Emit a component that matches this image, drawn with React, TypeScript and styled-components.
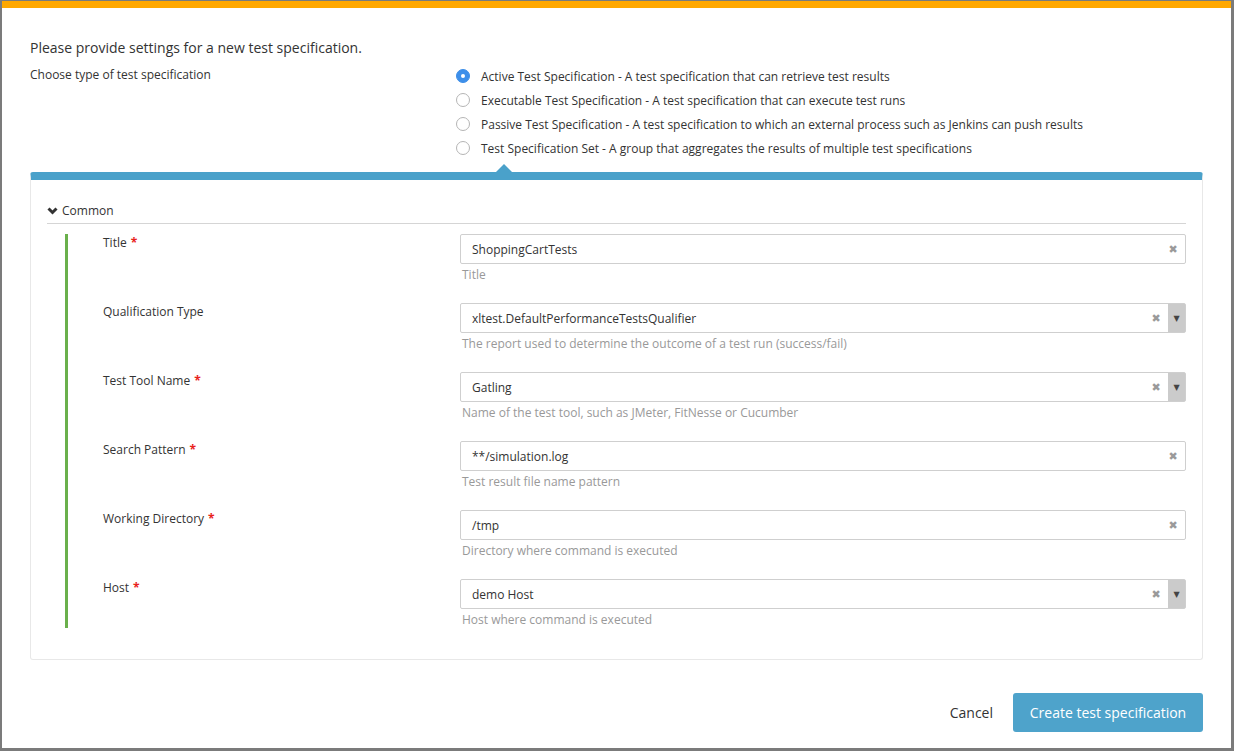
import React from "react";
import styled, { createGlobalStyle } from "styled-components";

const GlobalStyle = createGlobalStyle`
  html, body { margin: 0; padding: 0; background: #fff; }
  body { font-family: "Open Sans", "Liberation Sans", sans-serif; color: #333; }
  * { box-sizing: border-box; }
`;

const Window = styled.div`
  width: 1234px;
  height: 751px;
  border-style: solid;
  border-color: #7b7b7b;
  border-width: 1px 3px 3px 2px;
  background: #fff;
  display: flex;
  flex-direction: column;
  overflow: hidden;
`;

const TopBar = styled.div`
  height: 7px;
  background: #ffa800;
  flex: none;
`;

const Body = styled.div`
  padding: 30px 28px 0 28px;
  display: flex;
  flex-direction: column;
`;

const Intro = styled.div`
  font-size: 14px;
  line-height: 20px;
  color: #333;
`;

const TypeSection = styled.div`
  margin-top: 6px;
  display: grid;
  grid-template-columns: 426px 1fr;
`;

const TypeLabel = styled.div`
  font-size: 12px;
  line-height: 20px;
  padding-top: 1px;
  color: #333;
`;

const RadioList = styled.div`
  display: flex;
  flex-direction: column;
`;

const RadioRow = styled.label`
  display: flex;
  align-items: center;
  height: 24px;
  font-size: 12px;
  color: #333;
  gap: 11px;
`;

const RadioDot = styled.span<{ $checked?: boolean }>`
  width: 14px;
  height: 14px;
  border-radius: 50%;
  flex: none;
  border: 1px solid ${(p) => (p.$checked ? "#3d8ee8" : "#b5b5b5")};
  background: ${(p) => (p.$checked ? "#3d8fea" : "#fff")};
  display: flex;
  align-items: center;
  justify-content: center;
  &::after {
    content: "";
    width: 4px;
    height: 4px;
    border-radius: 50%;
    background: #fff;
    display: ${(p) => (p.$checked ? "block" : "none")};
  }
`;

const Panel = styled.div`
  position: relative;
  margin-top: 12px;
  border: 1px solid #e8e8e8;
  border-top: 8px solid #4aa1ca;
  border-radius: 3px;
  padding: 22px 16px 31px 16px;
  &::before {
    content: "";
    position: absolute;
    top: -16px;
    left: 465px;
    border-left: 8px solid transparent;
    border-right: 8px solid transparent;
    border-bottom: 8px solid #4aa1ca;
  }
`;

const SectionHeader = styled.div`
  display: flex;
  align-items: center;
  gap: 4px;
  font-size: 12px;
  line-height: 18px;
  color: #333;
  padding-bottom: 3px;
  border-bottom: 1px solid #d5d5d5;
`;

const Fields = styled.div`
  margin-top: 10px;
  margin-left: 18px;
  border-left: 3px solid #6ab04c;
  padding-left: 35px;
  display: flex;
  flex-direction: column;
  gap: 20px;
`;

const FieldRow = styled.div`
  display: grid;
  grid-template-columns: 357px 1fr;
`;

const FieldLabel = styled.div`
  font-size: 12px;
  line-height: 16px;
  padding-top: 1px;
  color: #333;
`;

const Required = styled.span`
  color: #e8221b;
  margin-left: 4px;
  font-weight: bold;
`;

const FieldControl = styled.div`
  display: flex;
  flex-direction: column;
`;

const InputBox = styled.div`
  height: 30px;
  border: 1px solid #cfcfcf;
  border-radius: 2px;
  display: flex;
  align-items: center;
  font-size: 12px;
  color: #333;
  padding-left: 11px;
`;

const InputText = styled.span`
  flex: 1;
`;

const ClearIcon = styled.span`
  color: #9a9a9a;
  font-size: 11px;
  width: 24px;
  text-align: center;
  font-family: "DejaVu Sans", sans-serif;
`;

const Arrow = styled.span`
  align-self: stretch;
  width: 17px;
  background: #cbcbcb;
  display: flex;
  align-items: center;
  justify-content: center;
  color: #444;
  font-size: 8px;
  font-family: "DejaVu Sans", sans-serif;
`;

const Help = styled.div`
  margin-top: 3px;
  padding-left: 2px;
  font-size: 12px;
  line-height: 16px;
  color: #999;
`;

const Footer = styled.div`
  margin-top: 33px;
  display: flex;
  justify-content: flex-end;
  align-items: center;
  gap: 20px;
`;

const CancelButton = styled.button`
  border: none;
  background: none;
  font-family: "Open Sans", "Liberation Sans", sans-serif;
  font-size: 14px;
  color: #333;
  padding: 0;
  cursor: pointer;
`;

const PrimaryButton = styled.button`
  height: 39px;
  width: 190px;
  border: none;
  border-radius: 3px;
  background: #4ea3cb;
  color: #fff;
  font-family: "Open Sans", "Liberation Sans", sans-serif;
  font-size: 14px;
  cursor: pointer;
`;

const types = [
  "Active Test Specification - A test specification that can retrieve test results",
  "Executable Test Specification - A test specification that can execute test runs",
  "Passive Test Specification - A test specification to which an external process such as Jenkins can push results",
  "Test Specification Set - A group that aggregates the results of multiple test specifications",
];

type Field = { label: string; required?: boolean; value: string; select?: boolean; help: string };

const fields: Field[] = [
  { label: "Title", required: true, value: "ShoppingCartTests", help: "Title" },
  {
    label: "Qualification Type",
    value: "xltest.DefaultPerformanceTestsQualifier",
    select: true,
    help: "The report used to determine the outcome of a test run (success/fail)",
  },
  {
    label: "Test Tool Name",
    required: true,
    value: "Gatling",
    select: true,
    help: "Name of the test tool, such as JMeter, FitNesse or Cucumber",
  },
  { label: "Search Pattern", required: true, value: "**/simulation.log", help: "Test result file name pattern" },
  { label: "Working Directory", required: true, value: "/tmp", help: "Directory where command is executed" },
  { label: "Host", required: true, value: "demo Host", select: true, help: "Host where command is executed" },
];

const Chevron = () => (
  <svg width="11" height="8" viewBox="0 0 11 8">
    <path d="M1.5 1.5 L5.5 5.5 L9.5 1.5" fill="none" stroke="#333" strokeWidth="3" />
  </svg>
);

export default function App() {
  return (
    <>
      <GlobalStyle />
      <Window>
        <TopBar />
        <Body>
          <Intro>Please provide settings for a new test specification.</Intro>
          <TypeSection>
            <TypeLabel>Choose type of test specification</TypeLabel>
            <RadioList>
              {types.map((t, i) => (
                <RadioRow key={t}>
                  <RadioDot $checked={i === 0} />
                  {t}
                </RadioRow>
              ))}
            </RadioList>
          </TypeSection>
          <Panel>
            <SectionHeader>
              <Chevron />
              Common
            </SectionHeader>
            <Fields>
              {fields.map((f) => (
                <FieldRow key={f.label}>
                  <FieldLabel>
                    {f.label}
                    {f.required && <Required>*</Required>}
                  </FieldLabel>
                  <FieldControl>
                    <InputBox>
                      <InputText>{f.value}</InputText>
                      <ClearIcon>✖</ClearIcon>
                      {f.select && <Arrow>▼</Arrow>}
                    </InputBox>
                    <Help>{f.help}</Help>
                  </FieldControl>
                </FieldRow>
              ))}
            </Fields>
          </Panel>
          <Footer>
            <CancelButton>Cancel</CancelButton>
            <PrimaryButton>Create test specification</PrimaryButton>
          </Footer>
        </Body>
      </Window>
    </>
  );
}
